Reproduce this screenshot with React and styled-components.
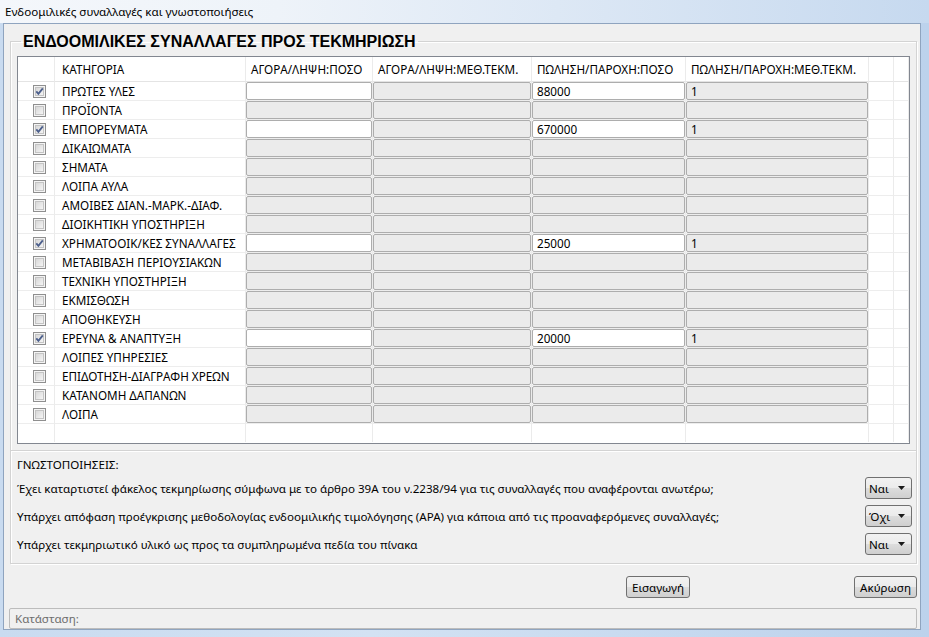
import React from 'react'
import styled, { createGlobalStyle } from 'styled-components'

const GlobalStyle = createGlobalStyle`
  html, body {
    margin: 0;
    padding: 0;
  }
  body {
    width: 929px;
    height: 637px;
    overflow: hidden;
    font-family: "Noto Sans", "Liberation Sans", sans-serif;
    font-size: 11.6px;
    color: #000;
  }
`

const rows = [
  { name: 'ΠΡΩΤΕΣ ΥΛΕΣ', checked: true, sell: '88000', sellMethod: '1' },
  { name: 'ΠΡΟΪΟΝΤΑ' },
  { name: 'ΕΜΠΟΡΕΥΜΑΤΑ', checked: true, sell: '670000', sellMethod: '1' },
  { name: 'ΔΙΚΑΙΩΜΑΤΑ' },
  { name: 'ΣΗΜΑΤΑ' },
  { name: 'ΛΟΙΠΑ ΑΥΛΑ' },
  { name: 'ΑΜΟΙΒΕΣ ΔΙΑΝ.-ΜΑΡΚ.-ΔΙΑΦ.' },
  { name: 'ΔΙΟΙΚΗΤΙΚΗ ΥΠΟΣΤΗΡΙΞΗ' },
  { name: 'ΧΡΗΜΑΤΟΟΙΚ/ΚΕΣ ΣΥΝΑΛΛΑΓΕΣ', checked: true, sell: '25000', sellMethod: '1' },
  { name: 'ΜΕΤΑΒΙΒΑΣΗ ΠΕΡΙΟΥΣΙΑΚΩΝ' },
  { name: 'ΤΕΧΝΙΚΗ ΥΠΟΣΤΗΡΙΞΗ' },
  { name: 'ΕΚΜΙΣΘΩΣΗ' },
  { name: 'ΑΠΟΘΗΚΕΥΣΗ' },
  { name: 'ΕΡΕΥΝΑ & ΑΝΑΠΤΥΞΗ', checked: true, sell: '20000', sellMethod: '1' },
  { name: 'ΛΟΙΠΕΣ ΥΠΗΡΕΣΙΕΣ' },
  { name: 'ΕΠΙΔΟΤΗΣΗ-ΔΙΑΓΡΑΦΗ ΧΡΕΩΝ' },
  { name: 'ΚΑΤΑΝΟΜΗ ΔΑΠΑΝΩΝ' },
  { name: 'ΛΟΙΠΑ' },
]

const headers = ['', 'ΚΑΤΗΓΟΡΙΑ', 'ΑΓΟΡΑ/ΛΗΨΗ:ΠΟΣΟ', 'ΑΓΟΡΑ/ΛΗΨΗ:ΜΕΘ.ΤΕΚΜ.', 'ΠΩΛΗΣΗ/ΠΑΡΟΧΗ:ΠΟΣΟ', 'ΠΩΛΗΣΗ/ΠΑΡΟΧΗ:ΜΕΘ.ΤΕΚΜ.', '', '']

const questions = [
  { text: 'Έχει καταρτιστεί φάκελος τεκμηρίωσης σύμφωνα με το άρθρο 39Α του ν.2238/94 για τις συναλλαγές που αναφέρονται ανωτέρω;', value: 'Ναι' },
  { text: 'Υπάρχει απόφαση προέγκρισης μεθοδολογίας ενδοομιλικής τιμολόγησης (APA) για κάποια από τις προαναφερόμενες συναλλαγές;', value: 'Όχι' },
  { text: 'Υπάρχει τεκμηριωτικό υλικό ως προς τα συμπληρωμένα πεδία του πίνακα', value: 'Ναι' },
]

function CheckBox({ checked }) {
  return (
    <svg width="13" height="13" viewBox="0 0 13 13">
      <defs>
        <linearGradient id="cbfill" x1="0" y1="0" x2="1" y2="1">
          <stop offset="0" stopColor="#d6d6d6" />
          <stop offset="1" stopColor="#f6f6f6" />
        </linearGradient>
      </defs>
      <rect x="0.5" y="0.5" width="12" height="12" fill="#f4f4f4" stroke="#8f8f8f" />
      <rect x="2.5" y="2.5" width="8" height="8" fill="url(#cbfill)" stroke="#c4c4c4" />
      {checked && (
        <path d="M3.3 6.4 L5.4 8.9 L9.8 3.4" fill="none" stroke="#4c5f8c" strokeWidth="1.8" />
      )}
    </svg>
  )
}

function Arrow() {
  return (
    <svg width="7" height="4" viewBox="0 0 7 4">
      <path d="M0 0 H7 L3.5 4 Z" fill="#1a1a1a" />
    </svg>
  )
}

export default function App() {
  return (
    <Window>
      <GlobalStyle />
      <TitleBar>Ενδοομιλικές συναλλαγές και γνωστοποιήσεις</TitleBar>
      <Client>
        <Group>
          <Legend>ΕΝΔΟΟΜΙΛΙΚΕΣ ΣΥΝΑΛΛΑΓΕΣ ΠΡΟΣ ΤΕΚΜΗΡΙΩΣΗ</Legend>
          <Table>
            {headers.map((h, i) => (
              <HeadCell key={'h' + i} $first={i === 1}>{h}</HeadCell>
            ))}
            {rows.map(row => (
              <React.Fragment key={row.name}>
                <CheckCell><CheckBox checked={row.checked} /></CheckCell>
                <NameCell>{row.name}</NameCell>
                <BoxCell><Field $enabled={row.checked}></Field></BoxCell>
                <BoxCell><Field></Field></BoxCell>
                <BoxCell><Field $enabled={row.checked}>{row.sell}</Field></BoxCell>
                <BoxCell><Field>{row.sellMethod}</Field></BoxCell>
                <Cell />
                <Cell />
              </React.Fragment>
            ))}
            {headers.map((h, i) => (
              <FillCell key={'f' + i} />
            ))}
          </Table>
        </Group>

        <Notices>
          <NoticeTitle>ΓΝΩΣΤΟΠΟΙΗΣΕΙΣ:</NoticeTitle>
          {questions.map(q => (
            <Question key={q.text}>
              <span>{q.text}</span>
              <Select>
                <span>{q.value}</span>
                <Arrow />
              </Select>
            </Question>
          ))}
        </Notices>

        <Actions>
          <Button>Εισαγωγή</Button>
          <Button>Ακύρωση</Button>
        </Actions>

        <StatusBar>Κατάσταση:</StatusBar>
      </Client>
    </Window>
  )
}

const Window = styled.div`
  width: 929px;
  height: 637px;
  display: flex;
  flex-direction: column;
  box-sizing: border-box;
  padding: 0 8px 7px 3px;
  background: linear-gradient(90deg, #c9dbf0 0%, #d3e2f3 40%, #bcd2ec 100%);
`

const TitleBar = styled.div`
  height: 23px;
  flex: none;
  margin: 0 -8px 0 -3px;
  padding-left: 5px;
  display: flex;
  align-items: center;
  background: linear-gradient(90deg, #f4f7fb 0%, #eef3f9 30%, #dde8f5 60%, #c6d9ef 100%);
`

const Client = styled.div`
  flex: 1;
  display: flex;
  flex-direction: column;
  background: #f0f0f0;
  border: 1px solid #8fa4bf;
  padding: 8px 3px 0 6px;
`

const Group = styled.fieldset`
  margin: 0;
  padding: 5px 6px 6px 6px;
  border: 1px solid #d3d3d3;
  box-shadow: inset 1px 1px 0 #fff, 1px 1px 0 #fff;
  min-width: 0;
`

const Legend = styled.legend`
  padding: 0 2px;
  margin-left: 4px;
  font-family: "Liberation Sans", Arial, sans-serif;
  font-weight: bold;
  font-size: 16px;
  line-height: 19px;
`

const Table = styled.div`
  display: grid;
  grid-template-columns: 37px 191px 127px 159px 154px 183px 25px 1fr;
  grid-auto-rows: 19px;
  grid-template-rows: 25px;
  border: 1px solid #828790;
  background: #fff;
  font-size: 11.7px;
`

const Cell = styled.div`
  box-sizing: border-box;
  border-right: 1px solid #ebebeb;
  border-bottom: 1px solid #ededed;
  display: flex;
  align-items: center;
  min-width: 0;
`

const HeadCell = styled(Cell)`
  padding-left: ${p => (p.$first ? 7 : 5)}px;
  white-space: nowrap;
  border-bottom-color: #e4e4e4;
`

const CheckCell = styled(Cell)`
  padding-left: 15px;
`

const NameCell = styled(Cell)`
  padding-left: 7px;
  white-space: nowrap;
`

const BoxCell = styled(Cell)`
  padding: 0;
  align-items: stretch;
`

const Field = styled.div`
  flex: 1;
  box-sizing: border-box;
  border: 1px solid #adadad;
  border-radius: 2px;
  background: ${p => (p.$enabled ? '#fff' : '#ebebeb')};
  padding-left: 4px;
  display: flex;
  align-items: center;
`

const FillCell = styled(Cell)`
  height: 18px;
  border-bottom: 0;
`

const Notices = styled.div`
  border: 1px solid #d3d3d3;
  border-top: 0;
  box-shadow: inset 1px 0 0 #fff, 1px 1px 0 #fff;
  padding: 4px 4px 5px 6px;
  display: flex;
  flex-direction: column;
`

const NoticeTitle = styled.div`
  height: 18px;
  display: flex;
  align-items: center;
  margin-bottom: 1px;
`

const Question = styled.div`
  height: 28px;
  display: flex;
  align-items: center;
  justify-content: space-between;
`

const Select = styled.div`
  width: 47px;
  height: 22px;
  box-sizing: border-box;
  border: 1px solid #707070;
  border-radius: 3px;
  background: linear-gradient(#f2f2f2 0%, #ebebeb 50%, #dddddd 50%, #cfcfcf 100%);
  display: flex;
  align-items: center;
  justify-content: space-between;
  padding: 0 6px 0 3px;
`

const Actions = styled.div`
  display: flex;
  justify-content: flex-end;
  gap: 164px;
  margin-top: 12px;
`

const Button = styled.div`
  height: 22px;
  box-sizing: border-box;
  padding: 0 5px;
  border: 1px solid #707070;
  border-radius: 3px;
  background: linear-gradient(#f2f2f2 0%, #ebebeb 50%, #dddddd 50%, #cfcfcf 100%);
  display: flex;
  align-items: center;
`

const StatusBar = styled.div`
  margin: 10px 0 0 -1px;
  height: 21px;
  box-sizing: border-box;
  border: 1px solid #bcbcbc;
  border-radius: 2px;
  padding-left: 5px;
  display: flex;
  align-items: center;
  color: #6d6d6d;
`
